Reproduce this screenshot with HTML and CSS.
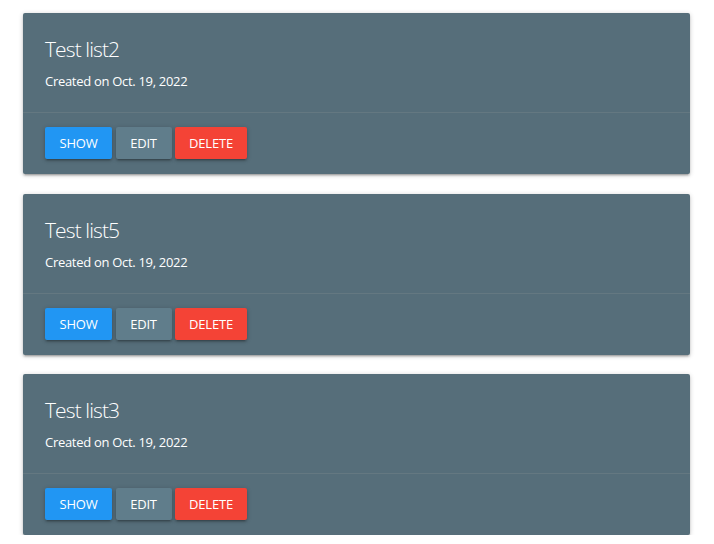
FILE: index.html
```html
<!DOCTYPE html>
<html>
<head>
<meta charset="utf-8">
<link rel="stylesheet" href="styles.css">
</head>
<body>
<main class="list">
  <section class="card">
    <div class="card-content">
      <h2 class="card-title">Test list2</h2>
      <p class="card-meta">Created on Oct. 19, 2022</p>
    </div>
    <div class="card-action">
      <a class="btn btn-show">Show</a>
      <a class="btn btn-edit">Edit</a>
      <a class="btn btn-delete">Delete</a>
    </div>
  </section>
  <section class="card">
    <div class="card-content">
      <h2 class="card-title">Test list5</h2>
      <p class="card-meta">Created on Oct. 19, 2022</p>
    </div>
    <div class="card-action">
      <a class="btn btn-show">Show</a>
      <a class="btn btn-edit">Edit</a>
      <a class="btn btn-delete">Delete</a>
    </div>
  </section>
  <section class="card">
    <div class="card-content">
      <h2 class="card-title">Test list3</h2>
      <p class="card-meta">Created on Oct. 19, 2022</p>
    </div>
    <div class="card-action">
      <a class="btn btn-show">Show</a>
      <a class="btn btn-edit">Edit</a>
      <a class="btn btn-delete">Delete</a>
    </div>
  </section>
</main>
</body>
</html>
```
FILE: styles.css
```css
html, body {
  margin: 0;
  padding: 0;
  background: #ffffff;
}
body {
  font-family: "Open Sans", "Noto Sans", sans-serif;
  color: #ffffff;
}
.list {
  display: flex;
  flex-direction: column;
  gap: 19.5px;
  padding: 13px 24px 0 23px;
}
.card {
  background: #566e7a;
  border-radius: 2px;
  box-shadow: 0 2px 2px 0 rgba(0,0,0,0.14), 0 3px 1px -2px rgba(0,0,0,0.12), 0 1px 5px 0 rgba(0,0,0,0.2);
}
.card-content {
  padding: 24px 22px 21px;
}
.card-title {
  margin: 0;
  font-size: 21px;
  line-height: 24px;
  font-weight: 300;
  letter-spacing: -0.9px;
}
.card-meta {
  margin: 10px 0 0;
  font-size: 13px;
  line-height: 20px;
  letter-spacing: -0.3px;
}
.card-action {
  border-top: 1px solid rgba(160,160,160,0.2);
  padding: 14px 22px 15px;
  display: flex;
  gap: 3.5px;
}
.btn {
  display: flex;
  align-items: center;
  justify-content: center;
  height: 32px;
  border-radius: 2px;
  font-size: 13px;
  text-transform: uppercase;
  color: #ffffff;
  letter-spacing: -0.2px;
  box-shadow: 0 2px 2px 0 rgba(0,0,0,0.14), 0 3px 1px -2px rgba(0,0,0,0.12), 0 1px 5px 0 rgba(0,0,0,0.2);
}
.btn-show { background: #2196f3; width: 67px; }
.btn-edit { background: #607d8b; width: 56px; }
.btn-delete { background: #f44336; width: 72px; }
```
